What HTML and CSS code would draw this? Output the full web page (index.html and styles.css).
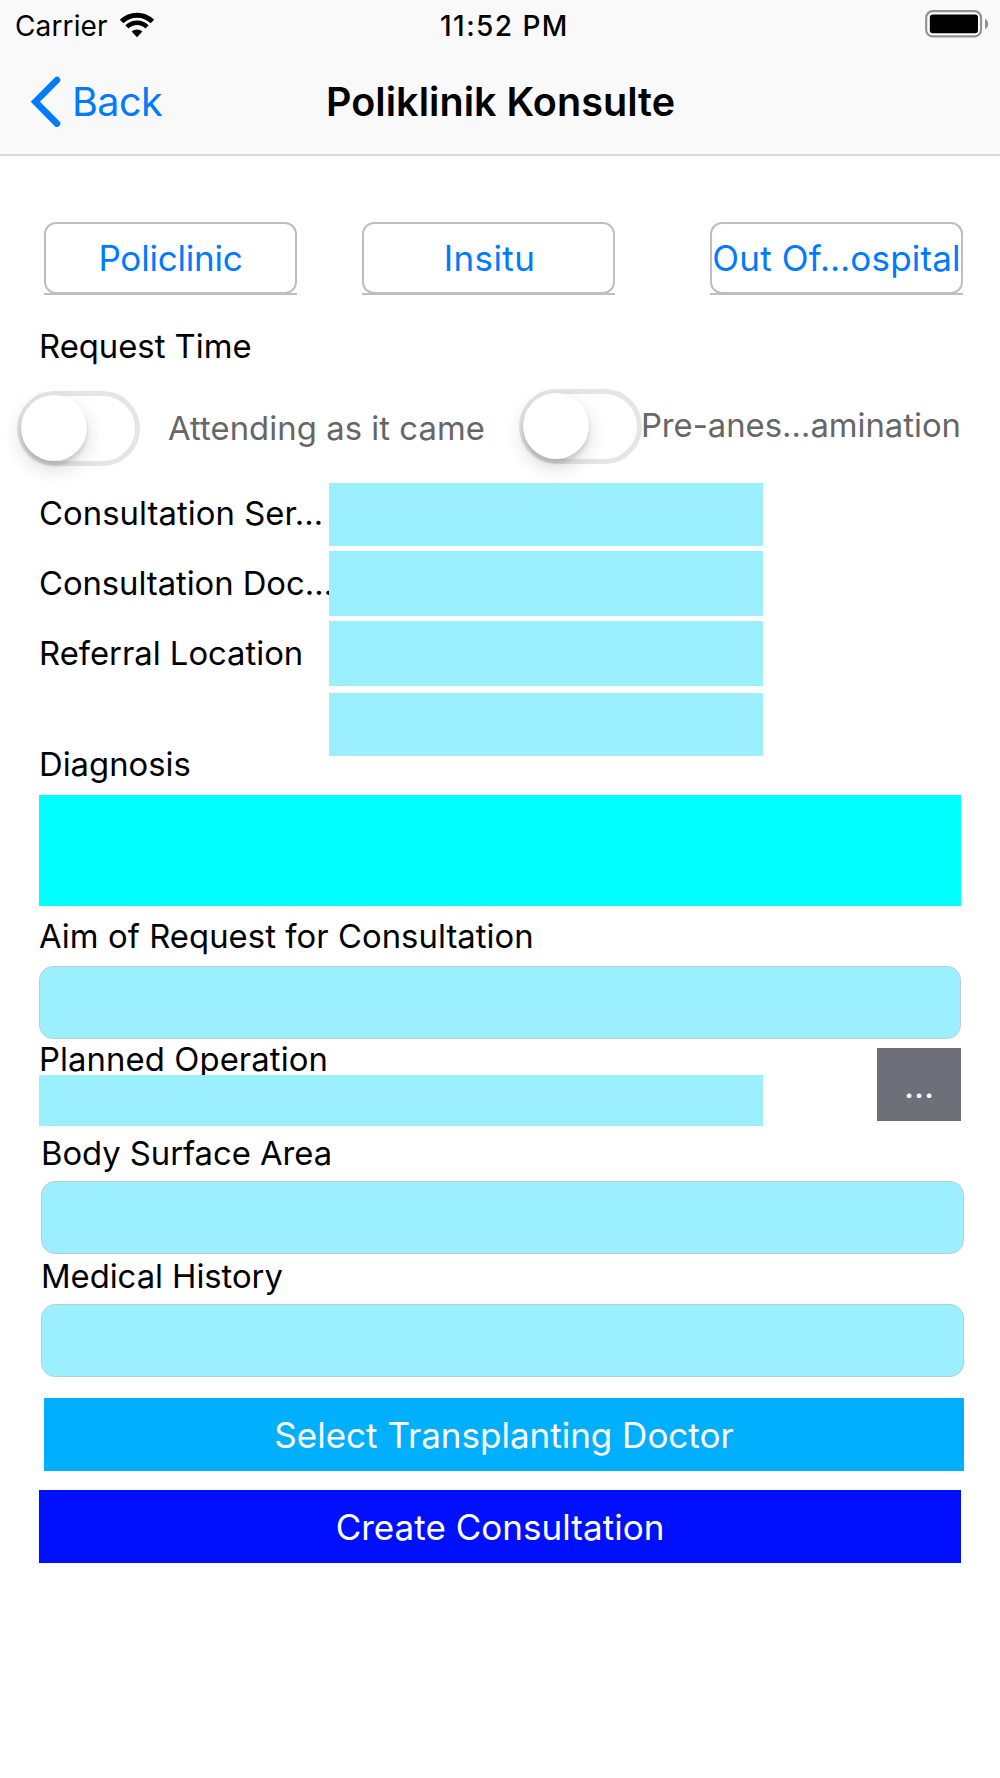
FILE: index.html
```
<!DOCTYPE html>
<html lang="en">
<head>
<meta charset="utf-8">
<title>Poliklinik Konsulte</title>
<link rel="stylesheet" href="styles.css">
</head>
<body>
<header class="header">
    <div class="status">
        <div class="carrier">
            <span>Carrier</span>
            <svg width="36" height="27" viewBox="0 0 36 27" fill="none" stroke="#000">
                <path d="M2.6 10.5A21.8 21.8 0 0 1 33.4 10.5" stroke-width="5"/>
                <path d="M7.9 15.9A14.3 14.3 0 0 1 28.1 15.9" stroke-width="4.4"/>
                <path d="M18 26.2L12.6 20.6A8 8 0 0 1 23.4 20.6Z" fill="#000" stroke="none"/>
            </svg>
        </div>
        <span class="time">11:52 PM</span>
        <svg class="battery" width="64" height="28" viewBox="0 0 64 28">
            <rect x="1.2" y="1.2" width="54.8" height="25.2" rx="6.5" fill="#fff" stroke="#929292" stroke-width="2.2"/>
            <rect x="4.8" y="4.6" width="48.2" height="18.6" rx="3" fill="#000"/>
            <path d="M60 9A5.5 5.5 0 0 1 60 19Z" fill="#929292"/>
        </svg>
    </div>
    <nav class="nav">
        <a class="back">
            <svg width="34" height="52" viewBox="0 0 34 52" fill="none" stroke="#007aff" stroke-width="6.6" stroke-linecap="round">
                <path d="M27 4L5.4 25.8L27 47.6"/>
            </svg>
            <span>Back</span>
        </a>
        <h1>Poliklinik Konsulte</h1>
    </nav>
</header>

<main class="content">
    <div class="types">
        <div class="type"><button>Policlinic</button></div>
        <div class="type"><button class="insitu">Insitu</button></div>
        <div class="type last"><button class="hospital">Out Of…ospital</button></div>
    </div>

    <p class="label request">Request Time</p>
    <div class="switches">
        <div class="switch first"><i></i></div>
        <span class="label attending">Attending as it came</span>
        <div class="switch"><i></i></div>
        <span class="label anesthesia">Pre-anes…amination</span>
    </div>

    <div class="rows">
        <div class="row service"><span class="label">Consultation Ser…</span><div class="box"></div></div>
        <div class="row doctor"><span class="label">Consultation Doc…</span><div class="box"></div></div>
        <div class="row"><span class="label">Referral Location</span><div class="box"></div></div>
        <div class="row empty"><span class="label"></span><div class="box"></div></div>
    </div>

    <p class="label diagnosis">Diagnosis</p>
    <div class="diagnosis-list"></div>

    <p class="label aim">Aim of Request for Consultation</p>
    <div class="field"></div>

    <div class="operation">
        <div class="planned">
            <p class="label">Planned Operation</p>
            <div class="box"></div>
        </div>
        <button class="more">...</button>
    </div>

    <div class="shifted">
        <p class="label">Body Surface Area</p>
        <div class="field"></div>
        <p class="label history">Medical History</p>
        <div class="field"></div>
    </div>

    <button class="select">Select Transplanting Doctor</button>
    <button class="create">Create Consultation</button>
</main>
</body>
</html>
```
FILE: styles.css
```
body{
margin:0;
background:#fff;
color:#000;
font-family:Inter,"Liberation Sans",sans-serif;
}
p,h1{
margin:0;
}
svg{
display:block;
flex:none;
}
button{
display:block;
margin:0;
padding:0;
border:0;
font:35px/42px Inter,"Liberation Sans",sans-serif;
white-space:nowrap;
}

/* header */
.header{
height:154px;
background:#f9f9f9;
border-bottom:2px solid #d9d9d9;
}
.status{
display:grid;
grid-template-columns:440px 1fr auto;
height:42px;
padding:9px 11px 0 0;
font-size:28px;
line-height:34px;
}
.carrier{
display:flex;
gap:11.5px;
padding-left:15px;
letter-spacing:.13px;
}
.carrier svg{
margin-top:2px;
}
.time{
font-weight:500;
letter-spacing:1.45px;
}
.battery{
margin-top:1.4px;
}
.nav{
display:grid;
grid-template-columns:326px 1fr;
padding-top:25px;
font-size:39.5px;
line-height:48px;
}
.back{
display:flex;
gap:8px;
padding-left:30px;
color:#007aff;
letter-spacing:-.5px;
}
.back span{
padding-top:2px;
}
h1{
padding-top:2px;
font-size:39.5px;
font-weight:600;
letter-spacing:.05px;
}

/* form */
.content{
padding:66px 39px 0;
}
.label{
display:block;
height:40px;
font-size:32.8px;
line-height:40px;
white-space:nowrap;
}
.types{
display:flex;
padding-left:5px;
gap:65px;
}
.type{
width:253px;
height:71px;
border-bottom:2px solid #bebebe;
}
.type.last{
margin-left:30px;
}
.type button{
width:253px;
height:72px;
border:2px solid #bebebe;
border-radius:12px;
background:#fff;
color:#007aff;
letter-spacing:-.2px;
}
.type .insitu{
padding-left:2px;
letter-spacing:.4px;
}
.type .hospital{
letter-spacing:.18px;
}
.request{
margin-top:31px;
}
.switches{
display:flex;
align-items:flex-start;
height:77px;
margin:23px 0 17px -22px;
color:#666;
}
.switch{
box-sizing:border-box;
flex:none;
width:123px;
height:75px;
border:5px solid #e5e5e5;
border-radius:38px;
}
.switch i{
display:block;
width:66px;
height:66px;
margin:-1px;
border-radius:50%;
background:#fff;
box-shadow:0 8px 20px rgba(0,0,0,.15),0 4px 4px rgba(0,0,0,.13);
}
.switch.first{
margin-top:2px;
}
.attending{
width:352px;
margin:19px 0 0 28px;
letter-spacing:.06px;
}
.anesthesia{
margin-top:16px;
margin-left:-1px;
}
.rows{
display:flex;
flex-direction:column;
gap:5px;
}
.row{
display:flex;
height:65px;
}
.row .label{
width:290px;
margin-top:12px;
}
.row .box{
width:434px;
}
.row.service,.row.empty{
height:63px;
}
.row.service .label{
margin-top:10px;
letter-spacing:.06px;
}
.row.doctor .label{
letter-spacing:-.05px;
}
.row.empty{
margin-top:2px;
}
/* boxes lie over the end of a long label */
.box{
position:relative;
background:#9cefff;
}
.diagnosis{
margin-top:-12px;
}
.diagnosis-list{
height:111px;
margin:11px 0 10px;
background:#0ff;
}
.field{
box-sizing:border-box;
height:73px;
border:1px solid #b3ced4;
border-radius:14px;
background:#9cefff;
}
.aim{
margin-bottom:10px;
letter-spacing:.06px;
}
.operation{
display:flex;
justify-content:space-between;
}
.planned{
width:724px;
}
.planned .label{
height:36px;
letter-spacing:.1px;
}
.planned .box{
height:51px;
}
.more{
width:84px;
height:73px;
margin-top:9px;
background:#6d7079;
color:#fff;
}
.shifted{
margin:7px -3px 21px 2px;
}
.shifted .field{
margin-top:8px;
}
.shifted .label{
letter-spacing:-.04px;
}
.history{
margin-top:2px;
}
.select,.create{
width:920px;
height:73px;
margin-left:5px;
background:#00b0ff;
color:#fff;
}
.create{
width:922px;
margin:19px 0 0;
background:#0010ff;
letter-spacing:.03px;
}
```
